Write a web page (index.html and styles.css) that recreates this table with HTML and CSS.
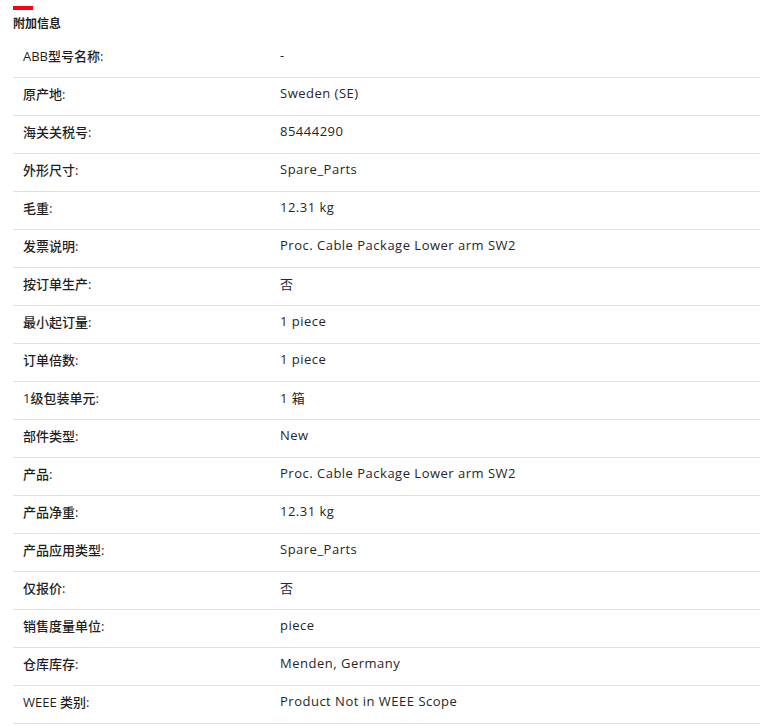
FILE: index.html
```html
<!DOCTYPE html>
<html lang="zh">
<head>
<meta charset="utf-8">
<link rel="stylesheet" href="styles.css">
</head>
<body>
<section class="info">
  <div class="accent"></div>
  <h2 class="title">附加信息</h2>
  <div class="table">
    <div class="row"><div class="label">ABB型号名称:</div><div class="value">-</div></div>
    <div class="row"><div class="label">原产地:</div><div class="value">Sweden (SE)</div></div>
    <div class="row"><div class="label">海关关税号:</div><div class="value">85444290</div></div>
    <div class="row"><div class="label">外形尺寸:</div><div class="value">Spare_Parts</div></div>
    <div class="row"><div class="label">毛重:</div><div class="value">12.31 kg</div></div>
    <div class="row"><div class="label">发票说明:</div><div class="value">Proc. Cable Package Lower arm SW2</div></div>
    <div class="row"><div class="label">按订单生产:</div><div class="value">否</div></div>
    <div class="row"><div class="label">最小起订量:</div><div class="value">1 piece</div></div>
    <div class="row"><div class="label">订单倍数:</div><div class="value">1 piece</div></div>
    <div class="row"><div class="label">1级包装单元:</div><div class="value">1 箱</div></div>
    <div class="row"><div class="label">部件类型:</div><div class="value">New</div></div>
    <div class="row"><div class="label">产品:</div><div class="value">Proc. Cable Package Lower arm SW2</div></div>
    <div class="row"><div class="label">产品净重:</div><div class="value">12.31 kg</div></div>
    <div class="row"><div class="label">产品应用类型:</div><div class="value">Spare_Parts</div></div>
    <div class="row"><div class="label">仅报价:</div><div class="value">否</div></div>
    <div class="row"><div class="label">销售度量单位:</div><div class="value">piece</div></div>
    <div class="row"><div class="label">仓库库存:</div><div class="value">Menden, Germany</div></div>
    <div class="row"><div class="label">WEEE 类别:</div><div class="value">Product Not in WEEE Scope</div></div>
  </div>
</section>
</body>
</html>
```
FILE: styles.css
```css
html, body {
  margin: 0;
  padding: 0;
  background: #ffffff;
}
body {
  font-family: "Open Sans", "Noto Sans CJK SC", sans-serif;
  color: #1f1f1f;
  overflow: hidden;
}
.info {
  padding: 6px 0 0 13px;
}
.accent {
  width: 20px;
  height: 4px;
  background: #ff000f;
}
.title {
  margin: 0;
  font-family: "Noto Sans CJK SC", sans-serif;
  font-size: 12px;
  font-weight: 700;
  line-height: 16px;
  padding-top: 5px;
  height: 18px;
}
.table {
  display: flex;
  flex-direction: column;
  margin-top: 7px;
}
.row {
  display: grid;
  grid-template-columns: 257px 1fr;
  height: 38px;
  align-items: center;
  border-bottom: 1px solid #e0e0e0;
  box-sizing: border-box;
  padding-left: 10px;
  padding-bottom: 7px;
}
.label {
  font-family: "Open Sans", "Noto Sans CJK SC", sans-serif;
  font-size: 13px;
  font-weight: 500;
  color: #1f1f1f;
}
.value {
  font-family: "Open Sans", "Noto Sans CJK SC", sans-serif;
  font-size: 13px;
  letter-spacing: 0.5px;
  color: #262626;
}
```
